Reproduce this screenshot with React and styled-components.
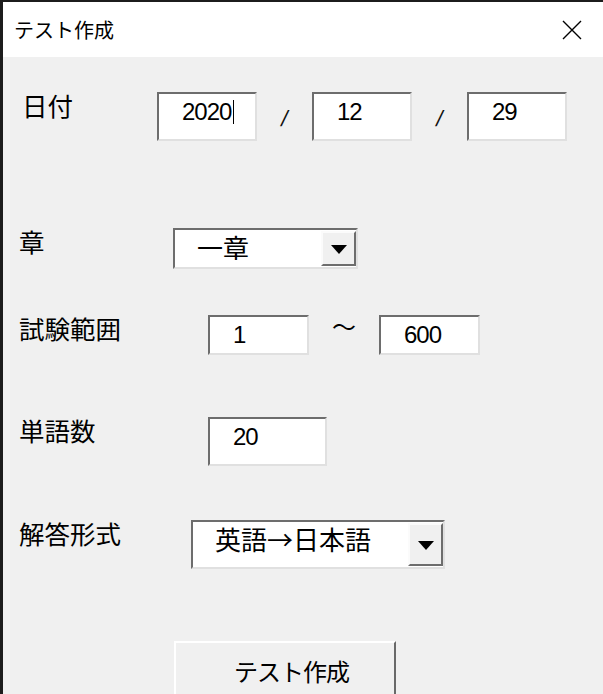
import React from 'react';
import styled, { createGlobalStyle } from 'styled-components';

const GlobalStyle = createGlobalStyle`
    html, body {
        margin: 0;
        padding: 0;
        background: #f0f0f0;
    }
    body {
        font-family: "Noto Sans CJK JP", "Noto Sans", sans-serif;
        color: #000;
    }
`;

const App = () => {
    return (
        <>
            <GlobalStyle />
            <Window>
                <TitleBar>
                    <Title>テスト作成</Title>
                    <CloseIcon width="20" height="20" viewBox="0 0 20 20">
                        <path d="M1 1 L19 19 M19 1 L1 19" stroke="#000" strokeWidth="1.4" fill="none" />
                    </CloseIcon>
                </TitleBar>
                <Body>
                    <Row $top={35}>
                        <Label $width={138} $indent={3}>日付</Label>
                        <TextBox $w={100} $h={49}>2020<Caret /></TextBox>
                        <Slash>/</Slash>
                        <TextBox $w={100} $h={49}>12</TextBox>
                        <Slash>/</Slash>
                        <TextBox $w={100} $h={49}>29</TextBox>
                    </Row>

                    <Row $top={87}>
                        <Label $width={154}>章</Label>
                        <Combo $w={185} $h={41}>
                            <ComboText>一章</ComboText>
                            <DropButton><Arrow /></DropButton>
                        </Combo>
                    </Row>

                    <Row $top={46}>
                        <Label $width={189}>試験範囲</Label>
                        <TextBox $w={101} $h={40}>1</TextBox>
                        <Tilde>～</Tilde>
                        <TextBox $w={101} $h={40}>600</TextBox>
                    </Row>

                    <Row $top={62}>
                        <Label $width={189}>単語数</Label>
                        <TextBox $w={119} $h={49}>20</TextBox>
                    </Row>

                    <Row $top={54}>
                        <Label $width={172}>解答形式</Label>
                        <Combo $w={254} $h={49}>
                            <ComboText>英語→日本語</ComboText>
                            <DropButton><Arrow /></DropButton>
                        </Combo>
                    </Row>

                    <Row $top={72}>
                        <CommandButton>テスト作成</CommandButton>
                    </Row>
                </Body>
            </Window>
        </>
    );
};

export default App;

const Window = styled.div`
    height: 100vh;
    box-sizing: border-box;
    overflow: hidden;
    border-top: 2px solid #1c1c1c;
    border-left: 3px solid #1c1c1c;
    display: flex;
    flex-direction: column;
    background: #f0f0f0;
`;

const TitleBar = styled.div`
    height: 55px;
    flex-shrink: 0;
    background: #fff;
    display: flex;
    align-items: center;
    justify-content: space-between;
    padding: 0 21px 0 11px;
`;

const Title = styled.span`
    font-size: 20px;
    line-height: 1;
`;

const CloseIcon = styled.svg`
    display: block;
`;

const Body = styled.div`
    flex: 1;
    display: flex;
    flex-direction: column;
    padding-left: 16px;
`;

const Row = styled.div`
    display: flex;
    align-items: flex-start;
    margin-top: ${p => p.$top}px;
`;

const Label = styled.div`
    box-sizing: border-box;
    flex-shrink: 0;
    width: ${p => p.$width}px;
    padding-left: ${p => p.$indent || 0}px;
    font-size: 25.5px;
    line-height: 1;
`;

const TextBox = styled.div`
    box-sizing: border-box;
    flex-shrink: 0;
    width: ${p => p.$w}px;
    height: ${p => p.$h}px;
    background: #fff;
    border: 2px solid;
    border-color: #6d6d6d #e0e0e0 #e0e0e0 #6d6d6d;
    padding: 4px 0 0 23px;
    display: flex;
    align-items: flex-start;
    font-family: "Liberation Sans", Arial, sans-serif;
    font-size: 24px;
    letter-spacing: -1px;
`;

const Caret = styled.span`
    display: inline-block;
    width: 1px;
    height: 24px;
    margin: 2px 0 0 2px;
    background: #000;
`;

const Slash = styled.span`
    flex-shrink: 0;
    width: 55px;
    text-align: center;
    margin-top: 16px;
    font-family: "Liberation Sans", Arial, sans-serif;
    font-size: 22px;
    line-height: 1;
    color: #111;
    transform: skewX(-12deg);
`;

const Tilde = styled.span`
    flex-shrink: 0;
    width: 70px;
    text-align: center;
    margin-top: -1px;
    font-size: 24px;
    line-height: 1;
`;

const Combo = styled.div`
    box-sizing: border-box;
    flex-shrink: 0;
    width: ${p => p.$w}px;
    height: ${p => p.$h}px;
    background: #fff;
    border: 2px solid;
    border-color: #6d6d6d #e0e0e0 #e0e0e0 #6d6d6d;
    display: flex;
`;

const ComboText = styled.span`
    flex: 1;
    padding: 4px 0 0 22px;
    font-size: 26px;
    line-height: 1;
`;

const DropButton = styled.div`
    box-sizing: border-box;
    width: 35px;
    margin: 1px 0;
    background: #f0f0f0;
    border: 2px solid;
    border-color: #fbfbfb #6d6d6d #6d6d6d #fbfbfb;
    display: flex;
    align-items: center;
    justify-content: center;
`;

const Arrow = styled.span`
    width: 0;
    height: 0;
    margin-top: 2px;
    border-left: 8px solid transparent;
    border-right: 8px solid transparent;
    border-top: 9px solid #000;
`;

const CommandButton = styled.button`
    box-sizing: border-box;
    width: 222px;
    height: 64px;
    margin-left: 155px;
    background: #f0f0f0;
    border: 2px solid;
    border-color: #ffffff #696969 #696969 #ffffff;
    padding: 16px 0 0 13px;
    display: flex;
    align-items: flex-start;
    justify-content: center;
    font-family: "Noto Sans CJK JP", "Noto Sans", sans-serif;
    font-size: 24px;
    line-height: 1;
    letter-spacing: -1px;
    color: #000;
`;
